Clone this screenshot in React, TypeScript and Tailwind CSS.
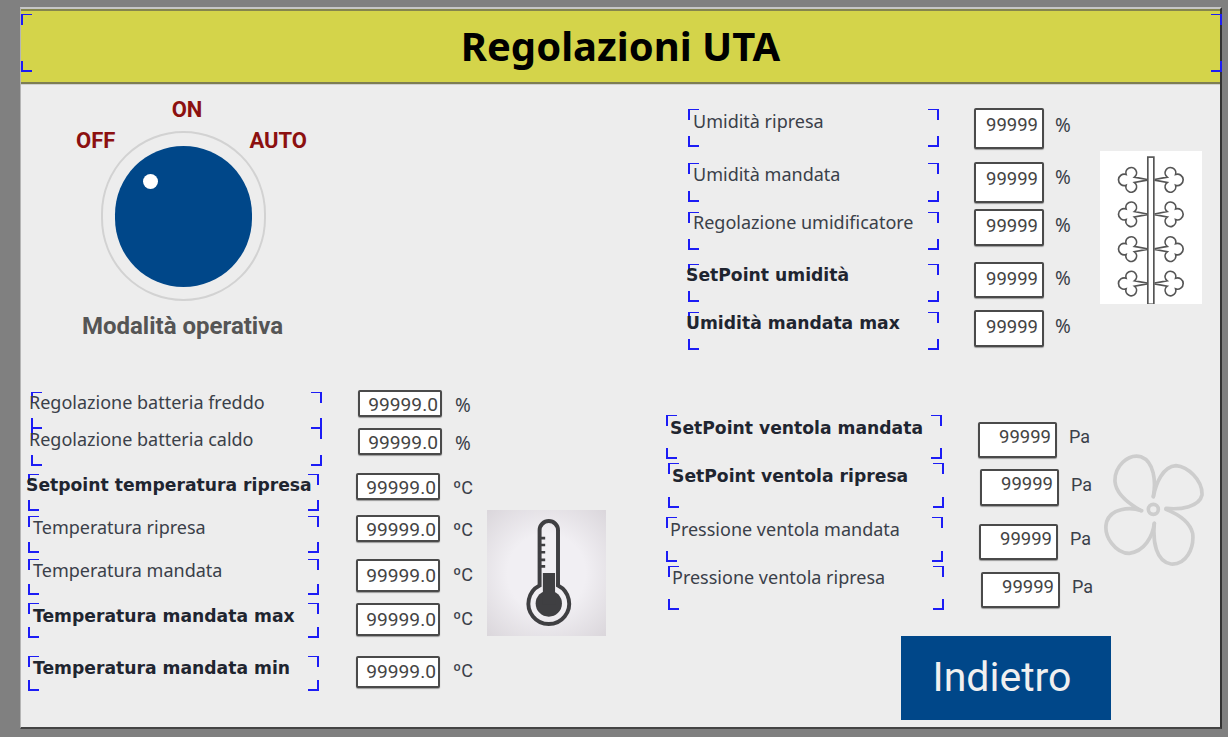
import React from 'react';

const labelFont = "font-['Noto_Sans',sans-serif]";
const boldFont = "font-['DejaVu_Sans',sans-serif]";
const roboto = "font-['Roboto',sans-serif]";

function Corners() {
  const c = 'absolute w-[11px] h-[11px] border-[#1c1cf5]';
  return (
    <div className="absolute inset-0 pointer-events-none">
      <span className={`${c} left-0 top-0 border-l-2 border-t`} />
      <span className={`${c} right-0 top-0 border-r-2 border-t`} />
      <span className={`${c} left-0 bottom-0 border-l-2 border-b-2`} />
      <span className={`${c} right-0 bottom-0 border-r-2 border-b-2`} />
    </div>
  );
}

type Row = {
  label: string;
  bold?: boolean;
  row: string; // row height + left offset
  box: string;
  text: string;
  input: string;
  value: string;
  unit: string;
  unitCls: string;
};

function Field({ r }: { r: Row }) {
  const unitFont = r.unit === '%' ? `${labelFont} text-[19px]` : `${roboto} text-[18px]`;
  return (
    <div className={`flex items-start ${r.row}`}>
      <div className={`relative shrink-0 ${r.box}`}>
        <Corners />
        <div className={`relative whitespace-nowrap leading-5 ${r.text} ${r.bold ? `${boldFont} text-[17.2px] font-bold text-[#1f2530]` : `${labelFont} -mt-px text-[18px] text-[#3a4049]`}`}>
          {r.label}
        </div>
      </div>
      <div className={`shrink-0 bg-white border-2 border-[#4a4a4a] rounded-[2px] shadow-[0_1px_1px_#9a9a9a] text-right text-[#444] leading-5 ${roboto} ${r.input}`}>
        {r.value}
      </div>
      <div className={`shrink-0 text-[#3a4049] leading-5 ${unitFont} ${r.unitCls}`}>{r.unit}</div>
    </div>
  );
}

const leftRows: Row[] = [
  { label: 'Regolazione batteria freddo', row: 'h-[36px] ml-[10px]', box: 'w-[291px] h-[37px]', text: 'pt-px -ml-[2px]', input: 'ml-[36px] -mt-[2px] w-[84px] h-[27px] pt-[3px] pr-[2px] text-[19.2px]', value: '99999.0', unit: '%', unitCls: 'ml-[13px] pt-[3px]' },
  { label: 'Regolazione batteria caldo', row: 'h-[46px] ml-[10px]', box: 'w-[291px] h-[38px]', text: 'pt-[2px] -ml-[2px]', input: 'ml-[36px] w-[84px] h-[27px] pt-[3px] pr-[2px] text-[19.2px]', value: '99999.0', unit: '%', unitCls: 'ml-[13px] pt-[5px]' },
  { label: 'Setpoint temperatura ripresa', bold: true, row: 'h-[42px] ml-[7px]', box: 'w-[291px] h-[37px]', text: 'pt-px -ml-[2px]', input: 'ml-[37px] -mt-px w-[84px] h-[27px] pt-[3px] pr-[2px] text-[19.2px]', value: '99999.0', unit: 'ºC', unitCls: 'ml-[13px] pt-[4px]' },
  { label: 'Temperatura ripresa', row: 'h-[43px] ml-[7px]', box: 'w-[291px] h-[37px]', text: 'pt-[2px] pl-[5px]', input: 'ml-[37px] -mt-px w-[84px] h-[27px] pt-[3px] pr-[2px] text-[19.2px]', value: '99999.0', unit: 'ºC', unitCls: 'ml-[13px] pt-[4px]' },
  { label: 'Temperatura mandata', row: 'h-[44px] ml-[7px]', box: 'w-[291px] h-[36px]', text: 'pt-[2px] pl-[5px]', input: 'ml-[37px] w-[84px] h-[33px] pt-[5px] pr-[2px] text-[19.2px]', value: '99999.0', unit: 'ºC', unitCls: 'ml-[13px] pt-[6px]' },
  { label: 'Temperatura mandata max', bold: true, row: 'h-[53px] ml-[7px]', box: 'w-[291px] h-[35px]', text: 'pt-[3px] pl-[5px]', input: 'ml-[37px] w-[84px] h-[33px] pt-[5px] pr-[2px] text-[19.2px]', value: '99999.0', unit: 'ºC', unitCls: 'ml-[13px] pt-[6px]' },
  { label: 'Temperatura mandata min', bold: true, row: 'h-[35px] ml-[7px]', box: 'w-[291px] h-[35px]', text: 'pt-[2px] pl-[5px]', input: 'ml-[37px] w-[84px] h-[32px] pt-[4px] pr-[2px] text-[19.2px]', value: '99999.0', unit: 'ºC', unitCls: 'ml-[13px] pt-[5px]' },
];

const humidityRows: Row[] = [
  { label: 'Umidità ripresa', row: 'h-[54px]', box: 'w-[251px] h-[38px]', text: 'pt-[3px] pl-[5px]', input: 'ml-[35px] -mt-px w-[70px] h-[41px] pt-[5px] pr-[4px] text-[18.5px]', value: '99999', unit: '%', unitCls: 'ml-[11px] pt-[6px]' },
  { label: 'Umidità mandata', row: 'h-[49px]', box: 'w-[251px] h-[39px]', text: 'pt-[2px] pl-[5px]', input: 'ml-[35px] -mt-px w-[70px] h-[41px] pt-[5px] pr-[4px] text-[18.5px]', value: '99999', unit: '%', unitCls: 'ml-[11px] pt-[4px]' },
  { label: 'Regolazione umidificatore', row: 'h-[52px]', box: 'w-[251px] h-[38px]', text: 'pt-px pl-[5px]', input: 'ml-[35px] -mt-[3px] w-[70px] h-[37px] pt-[5px] pr-[4px] text-[18.5px]', value: '99999', unit: '%', unitCls: 'ml-[11px] pt-[3px]' },
  { label: 'SetPoint umidità', bold: true, row: 'h-[48px]', box: 'w-[251px] h-[38px]', text: 'pt-px -ml-[2px]', input: 'ml-[35px] -mt-[2px] w-[70px] h-[36px] pt-[5px] pr-[4px] text-[18.5px]', value: '99999', unit: '%', unitCls: 'ml-[11px] pt-[4px]' },
  { label: 'Umidità mandata max', bold: true, row: 'h-[38px]', box: 'w-[251px] h-[38px]', text: 'pt-px -ml-[2px]', input: 'ml-[35px] -mt-[2px] w-[70px] h-[37px] pt-[5px] pr-[4px] text-[18.5px]', value: '99999', unit: '%', unitCls: 'ml-[11px] pt-[4px]' },
];

const fanRows: Row[] = [
  { label: 'SetPoint ventola mandata', bold: true, row: 'h-[48px]', box: 'w-[276px] h-[44px]', text: 'pt-[3px] pl-[4px]', input: 'ml-[36px] mt-[7px] w-[79px] h-[36px] pt-[3px] pr-[4px] text-[18.5px]', value: '99999', unit: 'Pa', unitCls: 'ml-[12px] pt-[12px]' },
  { label: 'SetPoint ventola ripresa', bold: true, row: 'h-[54px] ml-[2px]', box: 'w-[276px] h-[45px]', text: 'pt-[3px] pl-[4px]', input: 'ml-[36px] mt-[6px] w-[79px] h-[37px] pt-[3px] pr-[4px] text-[18.5px]', value: '99999', unit: 'Pa', unitCls: 'ml-[12px] pt-[12px]' },
  { label: 'Pressione ventola mandata', row: 'h-[49px]', box: 'w-[277px] h-[45px]', text: 'pt-[3px] pl-[4px]', input: 'ml-[36px] mt-[7px] w-[79px] h-[36px] pt-[3px] pr-[4px] text-[18.5px]', value: '99999', unit: 'Pa', unitCls: 'ml-[12px] pt-[12px]' },
  { label: 'Pressione ventola ripresa', row: 'h-[44px] ml-[2px]', box: 'w-[276px] h-[44px]', text: 'pt-[2px] pl-[4px]', input: 'ml-[37px] mt-[6px] w-[79px] h-[36px] pt-[3px] pr-[4px] text-[18.5px]', value: '99999', unit: 'Pa', unitCls: 'ml-[12px] pt-[11px]' },
];

function Knob() {
  const tick = 'text-[22px] leading-6 font-bold text-[#8c1010]';
  return (
    <div className={`flex flex-col items-center w-[326px] h-[308px] pt-[14px] ${roboto}`}>
      <span className={`ml-[6px] ${tick}`}>ON</span>
      <div className="flex justify-between self-start w-[231px] ml-[55px] mt-[7px]">
        <span className={tick}>OFF</span>
        <span className={tick}>AUTO</span>
      </div>
      <div className="-mt-[22px] -ml-[2px] w-[165px] h-[170px] shrink-0 rounded-full border-2 border-[#d2d2d2] flex items-center justify-center">
        <div className="relative w-[137px] h-[141px] rounded-full bg-[#004789]">
          <span className="absolute left-[28px] top-[28px] w-[15px] h-[15px] rounded-full bg-white" />
        </div>
      </div>
      <div className="mt-[11px] pr-[3px] text-[24px] leading-7 font-bold text-[#555]">Modalità operativa</div>
    </div>
  );
}

function Thermometer() {
  return (
    <div className="w-[119px] h-[126px] bg-[radial-gradient(circle,#f1eff3_45%,#dad6db_100%)]">
      <svg viewBox="0 0 362 380" className="w-full h-full" fill="none" stroke="#3f3f42">
        <path d="M160 228 V60 A28 28 0 0 1 216 60 V228 A62 62 0 1 1 160 228 Z" strokeWidth="12" />
        <path d="M157 84 H177 M157 105 H177 M157 127 H177 M157 150 H177 M157 170 H177" strokeWidth="8" />
        <circle cx="188" cy="283" r="40" fill="#3f3f42" stroke="none" />
        <rect x="170" y="190" width="37" height="95" fill="#3f3f42" stroke="none" />
      </svg>
    </div>
  );
}

function Humidifier() {
  const ys = [85, 188, 292, 395];
  const clover = 'M-2 -1 L-40 -8 A16 16 0 1 0 -65 -16 A17 17 0 1 0 -65 16 A16 16 0 1 0 -40 8 L-2 1';
  return (
    <div className="w-[102px] h-[153px] bg-white">
      <svg viewBox="0 0 305 455" className="w-full h-full" fill="none" stroke="#555">
        <rect x="143" y="17" width="18" height="440" strokeWidth="5" />
        {ys.map((y) => (
          <g key={y}>
            <path transform={`translate(143 ${y})`} d={clover} strokeWidth="5" />
            <path transform={`translate(161 ${y}) scale(-1 1)`} d={clover} strokeWidth="5" />
          </g>
        ))}
      </svg>
    </div>
  );
}

function Fan() {
  return (
    <svg viewBox="0 0 390 390" className="w-[130px] h-[130px]" fill="none" stroke="#cdcdcd" strokeWidth="11" strokeLinecap="round">
      <circle cx="187" cy="193" r="15" />
      <path d="M187 155 C195 110 190 50 150 35 C110 25 70 65 72 110 C75 150 120 180 150 197" />
      <path d="M152 197 C115 185 60 190 47 230 C35 275 75 325 115 325 C160 320 185 275 190 235" />
      <path d="M190 235 C185 290 195 350 240 357 C285 360 310 310 305 265 C295 225 255 205 225 193" />
      <path d="M225 190 C270 195 325 185 333 150 C335 105 290 65 255 62 C215 65 195 115 187 155" />
    </svg>
  );
}

export default function App() {
  return (
    <div className="w-[1228px] h-[737px] bg-[#808080] pt-[7px] pl-[20px] overflow-hidden">
      <div className="w-[1202px] h-[722px] bg-[#ededed] border-t-2 border-t-[#c6c6c6] border-l border-l-[#b5b5b5] border-r-2 border-r-[#333] border-b-2 border-b-[#444]">
        <div className="relative h-[75px] bg-[#d4d44a] border-t-2 border-t-[#85854e] border-b-2 border-b-[#7d7d52] shadow-[0_1px_0_#cfcfcf] flex items-center justify-center">
          <div className="absolute left-0 -right-[2px] top-[3px] bottom-[10px]">
            <Corners />
          </div>
          <h1 className={`-mt-[2px] text-[40px] leading-none font-bold text-black ${labelFont}`}>Regolazioni UTA</h1>
        </div>
        <div className="flex">
          <div className="w-[640px] shrink-0">
            <Knob />
            <div className="flex items-start">
              <div className="w-[466px] shrink-0">
                {leftRows.map((r) => (
                  <Field key={r.label} r={r} />
                ))}
              </div>
              <div className="mt-[118px]">
                <Thermometer />
              </div>
            </div>
          </div>
          <div className="flex-1">
            <div className="flex items-start ml-[27px] mt-[25px]">
              <div className="w-[412px] shrink-0">
                {humidityRows.map((r) => (
                  <Field key={r.label} r={r} />
                ))}
              </div>
              <div className="mt-[42px]">
                <Humidifier />
              </div>
            </div>
            <div className="flex items-start ml-[5px] mt-[65px]">
              <div className="w-[425px] shrink-0">
                {fanRows.map((r) => (
                  <Field key={r.label} r={r} />
                ))}
              </div>
              <div className="mt-[30px] shrink-0">
                <Fan />
              </div>
            </div>
            <button className={`block ml-[240px] mt-[26px] w-[210px] h-[84px] pr-[8px] bg-[#004789] text-[#f0f0f0] text-[41px] ${roboto}`}>Indietro</button>
          </div>
        </div>
      </div>
    </div>
  );
}
